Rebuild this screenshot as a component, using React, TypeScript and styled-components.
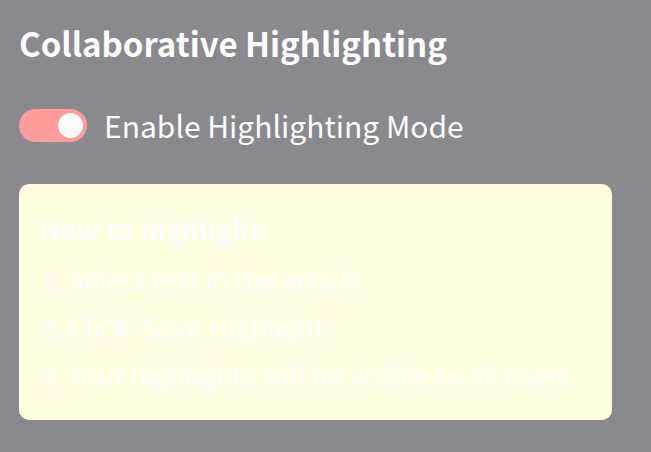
import React, { useState } from "react";
import styled, { createGlobalStyle } from "styled-components";

const GlobalStyle = createGlobalStyle`
  * { box-sizing: border-box; }
  body {
    margin: 0;
    background: #8a898e;
    color: #fcfcfc;
    font-family: "Noto Sans CJK SC", "Noto Sans", sans-serif;
  }
`;

const Panel = styled.main`
  display: flex;
  flex-direction: column;
  padding: 13px 39px 32px 19px;
`;

const Title = styled.h1`
  margin: 0 0 36px;
  font-size: 33px;
  line-height: 60px;
  font-weight: 700;
  white-space: nowrap;
`;

const ToggleRow = styled.label`
  display: flex;
  align-items: flex-start;
  gap: 17px;
  margin-bottom: 42px;
  cursor: pointer;
`;

const Switch = styled.input`
  appearance: none;
  flex: none;
  display: flex;
  align-items: center;
  width: 68px;
  height: 33px;
  margin: 0;
  padding: 4px;
  border-radius: 17px;
  background: #6b6a70;
  cursor: pointer;

  &::before {
    content: "";
    width: 25px;
    height: 25px;
    border-radius: 50%;
    background: #fcfcfc;
  }

  &:checked {
    justify-content: flex-end;
    background: #ff9d9d;
  }
`;

const ToggleText = styled.span`
  font-size: 30px;
  line-height: 32px;
  white-space: nowrap;
`;

const Help = styled.section`
  padding: 21px;
  border-radius: 10px;
  background: #fffce0;
`;

const HelpTitle = styled.h2`
  margin: 0 0 2px;
  font-size: 27px;
  line-height: 48px;
  font-weight: 700;
`;

const Steps = styled.ol`
  margin: 0;
  padding: 0;
  list-style: decimal inside;
  font-size: 27px;
  line-height: 48px;
  white-space: nowrap;
`;

const steps = [
  "Select text in the article",
  "Click 'Save Highlight'",
  "Your highlights will be visible to all users",
];

export default function App() {
  const [enabled, setEnabled] = useState(true);
  return (
    <>
      <GlobalStyle />
      <Panel>
        <Title>Collaborative Highlighting</Title>
        <ToggleRow>
          <Switch
            type="checkbox"
            role="switch"
            checked={enabled}
            onChange={(e) => setEnabled(e.target.checked)}
          />
          <ToggleText>Enable Highlighting Mode</ToggleText>
        </ToggleRow>
        <Help>
          <HelpTitle>How to highlight:</HelpTitle>
          <Steps>
            {steps.map((step) => (
              <li key={step}>{step}</li>
            ))}
          </Steps>
        </Help>
      </Panel>
    </>
  );
}
